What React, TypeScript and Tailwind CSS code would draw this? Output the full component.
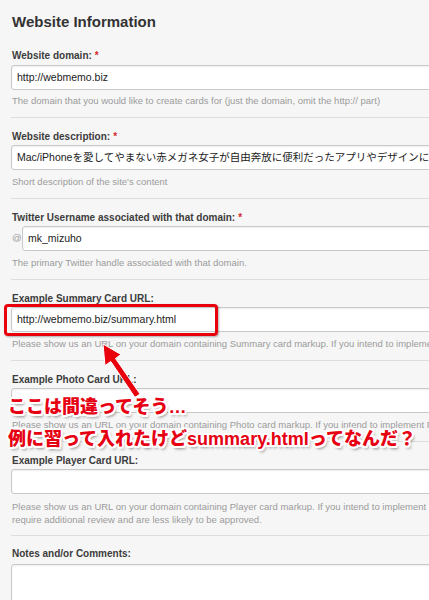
import React from "react";

const FONT = "font-['Liberation_Sans','Noto_Sans_CJK_JP',sans-serif]";

function Label({ text, required }: { text: string; required?: boolean }) {
  return (
    <div className="h-[12px] pl-px text-[10px] leading-[12px] font-bold text-[#3c3c3c] whitespace-nowrap">
      {text}
      {required && <span className="ml-[3px] text-[#d12b2b]">*</span>}
    </div>
  );
}

function Field({ value }: { value?: string }) {
  return (
    <div className="h-[25px] w-[600px] shrink-0 bg-white border border-[#c9c9c9] rounded-[3px] shadow-[inset_0_1px_2px_rgba(0,0,0,0.07)] pl-[5px] flex items-center text-[10.5px] text-[#222] whitespace-nowrap overflow-hidden">
      {value}
    </div>
  );
}

function Help({ children }: { children: React.ReactNode }) {
  return (
    <div className="mt-[6px] pl-px text-[9.5px] leading-[12px] text-[#9b9b9b] whitespace-nowrap">
      {children}
    </div>
  );
}

function Section({ children }: { children: React.ReactNode }) {
  return <div className="border-t border-[#dddddd] pt-[13px] pb-[10px]">{children}</div>;
}

const outline =
  "[text-shadow:2px_0_0_#fff,-2px_0_0_#fff,0_2px_0_#fff,0_-2px_0_#fff,1.6px_1.6px_0_#fff,-1.6px_-1.6px_0_#fff,1.6px_-1.6px_0_#fff,-1.6px_1.6px_0_#fff,2px_3px_3px_rgba(0,0,0,0.45)]";

export default function App() {
  return (
    <div className={`relative w-[429px] h-[600px] overflow-hidden bg-[#f6f6f6] ${FONT}`}>
      <div className="pl-[11px] w-[640px]">
        <h1 className="pt-[12px] pl-px text-[15px] leading-[20px] font-bold text-[#333]">
          Website Information
        </h1>

        {/* Website domain */}
        <div className="pt-[18px] pb-[10px]">
          <Label text="Website domain:" required />
          <div className="mt-[3px]">
            <Field value="http://webmemo.biz" />
          </div>
          <div className="mt-[5px] pl-px text-[9.5px] leading-[12px] text-[#9b9b9b] whitespace-nowrap">
            The domain that you would like to create cards for (just the domain, omit the http:// part)
          </div>
        </div>

        <Section>
          <Label text="Website description:" required />
          <div className="mt-[2px]">
            <Field value="Mac/iPhoneを愛してやまない赤メガネ女子が自由奔放に便利だったアプリやデザインに関する情報をお届けします。" />
          </div>
          <Help>Short description of the site's content</Help>
        </Section>

        <Section>
          <Label text="Twitter Username associated with that domain:" required />
          <div className="mt-[2px] flex items-center">
            <span className="w-[11px] pl-px text-[9.5px] text-[#9b9b9b]">@</span>
            <Field value="mk_mizuho" />
          </div>
          <Help>The primary Twitter handle associated with that domain.</Help>
        </Section>

        <Section>
          <Label text="Example Summary Card URL:" />
          <div className="mt-[2px]">
            <Field value="http://webmemo.biz/summary.html" />
          </div>
          <Help>
            Please show us an URL on your domain containing Summary card markup. If you intend to implement Summary cards, please
          </Help>
        </Section>

        <Section>
          <Label text="Example Photo Card URL:" />
          <div className="mt-[2px]">
            <Field />
          </div>
          <Help>
            Please show us an URL on your domain containing Photo card markup. If you intend to implement Photo cards, please
          </Help>
        </Section>

        <div className="border-t border-[#dddddd] pt-[13px] pb-[9px]">
          <Label text="Example Player Card URL:" />
          <div className="mt-[2px]">
            <Field />
          </div>
          <div className="mt-[6px] pl-px text-[9.5px] leading-[13px] text-[#9b9b9b] whitespace-nowrap">
            Please show us an URL on your domain containing Player card markup. If you intend to implement Player cards, please note that they
            <br />
            require additional review and are less likely to be approved.
          </div>
        </div>

        <div className="border-t border-[#dddddd] pt-[12px]">
          <Label text="Notes and/or Comments:" />
          <div className="mt-[4px] h-[80px] w-[600px] bg-white border border-[#c9c9c9] rounded-[3px] shadow-[inset_0_1px_2px_rgba(0,0,0,0.07)]" />
        </div>
      </div>

      {/* highlight box around the summary URL field */}
      <div className="absolute left-[4px] top-[304px] w-[214px] h-[32px] border-[3px] border-[#e8000d] rounded-[4px] shadow-[1px_1px_2px_rgba(0,0,0,0.3)] pointer-events-none" />

      {/* arrow pointing at the URL field */}
      <svg
        className="absolute left-0 top-0 pointer-events-none"
        width="429"
        height="600"
        viewBox="0 0 429 600"
      >
        <polygon
          points="103,344 121,354.5 115.5,358.5 140,394 135,397.5 110.8,361.5 105,365.5"
          fill="#e8000d"
          stroke="#ffffff"
          strokeWidth="1"
          strokeLinejoin="round"
        />
      </svg>

      {/* hand-written comment */}
      <div
        className={`absolute left-[8px] top-[396px] text-[18px] leading-[22px] font-black text-[#e60012] whitespace-nowrap ${outline}`}
      >
        ここは間違ってそう…
      </div>
      <div
        className={`absolute left-[8px] top-[428px] text-[18px] leading-[22px] font-black text-[#e60012] whitespace-nowrap ${outline}`}
      >
        例に習って入れたけどsummary.htmlってなんだ？
      </div>
    </div>
  );
}
